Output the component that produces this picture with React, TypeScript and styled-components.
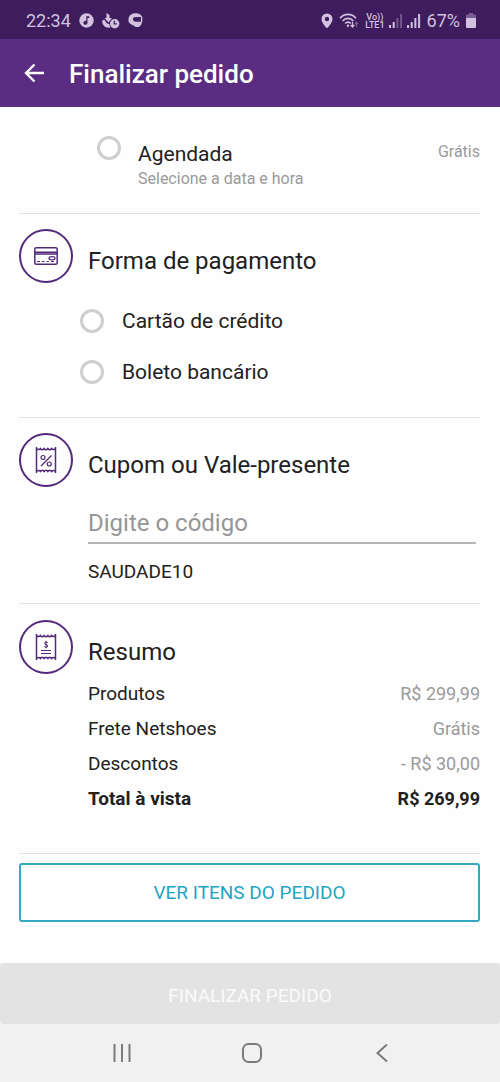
import React, { useState } from "react";
import styled, { createGlobalStyle } from "styled-components";

const GlobalStyle = createGlobalStyle`
  *, *::before, *::after { box-sizing: border-box; }
  body {
    margin: 0;
    background: #fefefe;
    color: #212121;
    font-family: Roboto, "Liberation Sans", sans-serif;
  }
  h1, h2, p, dl, dd, dt, fieldset { margin: 0; padding: 0; border: 0; font-weight: 400; }
  button, input { font-family: inherit; }
`;

const Screen = styled.div`
  display: flex;
  flex-direction: column;
  min-height: 100vh;
`;

const StatusBar = styled.div`
  display: flex;
  align-items: center;
  justify-content: space-between;
  height: 39px;
  padding: 2px 24px 0 26px;
  background: #3f1c5e;
  color: #d2c2df;
  font-size: 18px;
  line-height: 24px;
`;

const StatusGroup = styled.div<{ $gap: number }>`
  display: flex;
  align-items: center;
  gap: ${(p) => p.$gap}px;
`;

const VoLte = styled.span`
  display: flex;
  flex-direction: column;
  font-size: 9px;
  font-weight: 500;
  line-height: 8px;
  text-align: center;
`;

const AppBar = styled.header`
  display: flex;
  align-items: center;
  gap: 21px;
  height: 68px;
  padding: 0 20px;
  background: #5a2d82;
  color: #ffffff;
`;

const IconButton = styled.button`
  display: flex;
  align-items: center;
  justify-content: center;
  width: 28px;
  height: 28px;
  padding: 0;
  border: 0;
  background: none;
  color: inherit;
`;

const AppTitle = styled.h1`
  padding-top: 2px;
  font-size: 26px;
  font-weight: 500;
  line-height: 36px;
`;

const Main = styled.main`
  flex: 1;
  padding: 0 20px 41px 19px;
`;

const Section = styled.section<{ $top?: number; $bottom: number }>`
  padding: ${(p) => p.$top ?? 15}px 0 ${(p) => p.$bottom}px;
  border-bottom: 1px solid #e2e2e2;
`;

const SectionHead = styled.div`
  display: flex;
  gap: 15px;
`;

const Badge = styled.span`
  display: flex;
  align-items: center;
  justify-content: center;
  flex: none;
  width: 54px;
  height: 54px;
  border: 2px solid #532a7c;
  border-radius: 50%;
  color: #532a7c;
`;

const SectionTitle = styled.h2`
  padding-top: 16px;
  font-size: 24px;
  line-height: 32px;
`;

const Radio = styled.input`
  appearance: none;
  flex: none;
  width: 24px;
  height: 24px;
  margin: 0;
  border: 3px solid #cfcfcf;
  border-radius: 50%;
  background: #ffffff;
  &:checked {
    border-color: #5a2d82;
    box-shadow: inset 0 0 0 3px #ffffff;
    background: #5a2d82;
  }
`;

const DeliveryOption = styled.label`
  display: flex;
  align-items: flex-start;
  padding-left: 78px;
`;

const DeliveryText = styled.span`
  display: flex;
  flex: 1;
  flex-direction: column;
  padding: 4px 0 0 17px;
`;

const OptionName = styled.span`
  font-size: 21px;
  line-height: 28px;
`;

const Hint = styled.span`
  color: #9a9a9a;
  font-size: 16px;
  line-height: 22px;
`;

const DeliveryPrice = styled(Hint)`
  padding-top: 5px;
`;

const PaymentOptions = styled.fieldset`
  padding: 12px 0 0 61px;
`;

const PaymentOption = styled.label`
  display: flex;
  align-items: center;
  gap: 18px;
  height: 51px;
`;

const CouponForm = styled.div`
  padding: 17px 4px 0 69px;
`;

const CouponInput = styled.input`
  display: block;
  width: 100%;
  height: 40px;
  padding: 0;
  border: 0;
  border-bottom: 2px solid #b5b5b5;
  border-radius: 0;
  outline: 0;
  background: none;
  color: #212121;
  font-size: 24px;
  &::placeholder { color: #969696; opacity: 1; }
`;

const CouponCode = styled.p`
  padding-top: 16px;
  font-size: 19px;
  line-height: 24px;
`;

const Summary = styled.dl`
  padding: 2px 0 0 69px;
`;

const SummaryRow = styled.div<{ $total?: boolean }>`
  display: flex;
  align-items: center;
  justify-content: space-between;
  height: 35px;
  dt, dd { font-weight: ${(p) => (p.$total ? 700 : 400)}; }
  dt { font-size: 19px; }
  dd {
    color: ${(p) => (p.$total ? "#212121" : "#9a9a9a")};
    font-size: 18px;
  }
`;

const OutlineButton = styled.button`
  display: block;
  width: 100%;
  height: 59px;
  margin-top: 9px;
  border: 2px solid #35a9c4;
  border-radius: 3px;
  background: #ffffff;
  color: #1fa5c4;
  font-size: 19px;
`;

const SubmitArea = styled.div`
  background: #f1f1f1;
`;

const SubmitButton = styled.button`
  display: block;
  width: 100%;
  height: 61px;
  padding: 4px 0 0;
  border: 0;
  border-radius: 4px;
  background: #e3e3e3;
  color: #fafafa;
  font-size: 19px;
`;

const NavBar = styled.nav`
  display: flex;
  align-items: center;
  justify-content: space-between;
  height: 58px;
  padding: 0 104px 0 108px;
  background: #f1f1f1;
  color: #7b7b7b;
`;

const MusicIcon = () => (
  <svg width="15" height="15" viewBox="0 0 15 15" aria-hidden="true">
    <circle cx="7.500" cy="7.500" r="7.200" fill="currentColor" />
    <path d="M7.300 3.200h3v1.900H8.500v4.600a2 2 0 1 1-1.200-1.800z" fill="#3f1c5e" />
  </svg>
);

const DownloadClockIcon = () => (
  <svg width="18" height="16" viewBox="0 0 18 16" aria-hidden="true">
    <path d="M4.500 0 7.500 2v3H10L6.500 9.500 2.500 5h2z" fill="currentColor" />
    <path d="M0 8.500q1-2.500 2.500-1.500l2.500 3.500 2.500.5q-.2 2 1 3.500Q1.500 16 0 8.500z" fill="currentColor" />
    <circle cx="12.700" cy="10.700" r="4.700" fill="currentColor" />
    <path d="M12.300 7.800v3h2.400" stroke="#3f1c5e" strokeWidth="1.200" fill="none" />
  </svg>
);

const HelmetIcon = () => (
  <svg width="15" height="15" viewBox="0 0 15 15" aria-hidden="true">
    <path
      d="M7.500.3C11 .3 13.600 2 14 4H7.500C5.300 4 5 5.200 5 6.200c0 1.500 1.200 2.500 3 2.500h5.800c0 3-1.600 5.400-4.800 5.400-2 0-2.500-1-4-1.800C2 11 .4 9.800.4 6.800.4 3 3.400.3 7.500.3z"
      fill="currentColor"
    />
    <path d="M13.600 3.800v5.200" stroke="currentColor" strokeWidth="1.400" />
  </svg>
);

const PinIcon = () => (
  <svg width="12" height="16" viewBox="0 0 12 16" aria-hidden="true">
    <path
      d="M6 .5a5.500 5.500 0 0 0-5.500 5.500C.5 10 6 15.300 6 15.300S11.500 10 11.500 6A5.500 5.500 0 0 0 6 .5zm0 3.300a2.200 2.200 0 1 1 0 4.400 2.200 2.200 0 0 1 0-4.400z"
      fill="currentColor"
      fillRule="evenodd"
    />
  </svg>
);

const WifiIcon = () => (
  <svg width="20" height="16" viewBox="0 0 20 16" fill="none" stroke="currentColor" aria-hidden="true">
    <path d="M1 5.200c4.500-5 11.500-5 16 0M3.600 8c3-3.400 7.800-3.400 10.800 0M6.200 10.500c1.600-1.800 4-1.800 5.600 0" strokeWidth="1.700" />
    <circle cx="9" cy="12.700" r="1.200" fill="currentColor" stroke="none" />
    <path d="M13.500 9v4.500M11.700 12l1.800 2 1.800-2" strokeWidth="1.200" />
    <path d="M17.500 14V9.500M16 11l1.500-1.800L19 11" strokeWidth="1.200" opacity="0.4" />
  </svg>
);

const SignalIcon = ({ strength }: { strength: number }) => (
  <svg width="14" height="15" viewBox="0 0 14 15" fill="currentColor" aria-hidden="true">
    {[3, 6, 10, 14].map((h, i) => (
      <rect key={h} x={i * 3.7} y={15 - h} width="2" height={h} opacity={i < strength ? 1 : 0.35} />
    ))}
  </svg>
);

const BatteryIcon = () => (
  <svg width="10" height="15" viewBox="0 0 10 15" fill="currentColor" aria-hidden="true">
    <path d="M3 0h4v1.500h2q1 0 1 1V5H0V2.500q0-1 1-1h2z" opacity="0.4" />
    <path d="M0 5h10v9q0 1-1 1H1q-1 0-1-1z" />
  </svg>
);

const BackArrow = () => (
  <svg width="22" height="20" viewBox="0 0 22 20" fill="none" stroke="currentColor" strokeWidth="2.400" aria-hidden="true">
    <path d="M21 10H3M11.500 1.500 3 10l8.500 8.500" />
  </svg>
);

const CardIcon = () => (
  <svg width="24" height="18" viewBox="0 0 24 18" fill="none" stroke="currentColor" strokeWidth="1.500" aria-hidden="true">
    <rect x="0.800" y="0.800" width="22.400" height="16.400" rx="1.500" />
    <path d="M1 5.200h22M1 7h22" />
    <ellipse cx="18" cy="11.200" rx="3" ry="1.600" strokeWidth="1.200" />
    <path d="M3 14.500h3M8 14.500h2.500M12.500 14.500H15M17 14.500h3" strokeWidth="1.200" />
  </svg>
);

const ReceiptOutline = () => (
  <path d="M1.500 1v26M20.500 1v26M1.500 2.500q2 2 4 0 1.600 2.600 3.600 0 1.900 2.600 3.800 0 2 2.600 3.600 0 2 2 4 0M1.500 25.500q2-2 4 0 1.600-2.600 3.600 0 1.900-2.600 3.800 0 2-2.600 3.600 0 2-2 4 0" />
);

const CouponIcon = () => (
  <svg width="22" height="28" viewBox="0 0 22 28" fill="none" stroke="currentColor" strokeWidth="1.500" aria-hidden="true">
    <ReceiptOutline />
    <circle cx="8" cy="11.500" r="2" strokeWidth="1.200" />
    <circle cx="14.300" cy="18" r="2" strokeWidth="1.200" />
    <path d="M16.500 9.500 6 20" strokeWidth="1.200" />
  </svg>
);

const ReceiptIcon = () => (
  <svg width="22" height="28" viewBox="0 0 22 28" fill="none" stroke="currentColor" strokeWidth="1.500" aria-hidden="true">
    <ReceiptOutline />
    <path d="M6 17.500h10M6 20.500h10" strokeWidth="1.200" />
    <path d="M12.800 9.800C12 8.600 9.500 8.800 9.500 10.300c0 1.700 3.300 1 3.300 2.700 0 1.600-2.800 1.700-3.600.4M11.100 7.800v7.600" strokeWidth="1" />
  </svg>
);

const RecentsIcon = () => (
  <svg width="20" height="20" viewBox="0 0 20 20" stroke="currentColor" strokeWidth="2" aria-hidden="true">
    <path d="M2.500 1v18M10 1v18M17.500 1v18" />
  </svg>
);

const HomeIcon = () => (
  <svg width="20" height="20" viewBox="0 0 20 20" fill="none" stroke="currentColor" strokeWidth="2" aria-hidden="true">
    <rect x="1" y="1" width="18" height="18" rx="5.500" />
  </svg>
);

const NavBackIcon = () => (
  <svg width="20" height="20" viewBox="0 0 20 20" fill="none" stroke="currentColor" strokeWidth="2" aria-hidden="true">
    <path d="M15 1.500 5.500 10l9.500 8.500" />
  </svg>
);

const payments = ["Cartão de crédito", "Boleto bancário"];

const summary = [
  { label: "Produtos", value: "R$ 299,99" },
  { label: "Frete Netshoes", value: "Grátis" },
  { label: "Descontos", value: "- R$ 30,00" },
  { label: "Total à vista", value: "R$ 269,99", total: true },
];

export default function App() {
  const [code, setCode] = useState("");

  return (
    <Screen>
      <GlobalStyle />
      <StatusBar>
        <StatusGroup $gap={8}>
          <span>22:34</span>
          <MusicIcon />
          <DownloadClockIcon />
          <HelmetIcon />
        </StatusGroup>
        <StatusGroup $gap={6}>
          <PinIcon />
          <WifiIcon />
          <StatusGroup $gap={4}>
            <VoLte>
              <span>Vo))</span>
              <span>LTE1</span>
            </VoLte>
            <SignalIcon strength={2} />
            <SignalIcon strength={4} />
          </StatusGroup>
          <StatusGroup $gap={6}>
            <span>67%</span>
            <BatteryIcon />
          </StatusGroup>
        </StatusGroup>
      </StatusBar>

      <AppBar>
        <IconButton type="button" aria-label="Voltar">
          <BackArrow />
        </IconButton>
        <AppTitle>Finalizar pedido</AppTitle>
      </AppBar>

      <Main>
        <Section $top={29} $bottom={23}>
          <DeliveryOption>
            <Radio type="radio" name="entrega" />
            <DeliveryText>
              <OptionName>Agendada</OptionName>
              <Hint>Selecione a data e hora</Hint>
            </DeliveryText>
            <DeliveryPrice>Grátis</DeliveryPrice>
          </DeliveryOption>
        </Section>

        <Section $bottom={20}>
          <SectionHead>
            <Badge><CardIcon /></Badge>
            <SectionTitle>Forma de pagamento</SectionTitle>
          </SectionHead>
          <PaymentOptions aria-label="Forma de pagamento">
            {payments.map((name) => (
              <PaymentOption key={name}>
                <Radio type="radio" name="pagamento" />
                <OptionName>{name}</OptionName>
              </PaymentOption>
            ))}
          </PaymentOptions>
        </Section>

        <Section $bottom={19}>
          <SectionHead>
            <Badge><CouponIcon /></Badge>
            <SectionTitle>Cupom ou Vale-presente</SectionTitle>
          </SectionHead>
          <CouponForm>
            <CouponInput
              type="text"
              aria-label="Código do cupom"
              placeholder="Digite o código"
              value={code}
              onChange={(e) => setCode(e.target.value)}
            />
            <CouponCode>SAUDADE10</CouponCode>
          </CouponForm>
        </Section>

        <Section $top={16} $bottom={37}>
          <SectionHead>
            <Badge><ReceiptIcon /></Badge>
            <SectionTitle>Resumo</SectionTitle>
          </SectionHead>
          <Summary>
            {summary.map((row) => (
              <SummaryRow key={row.label} $total={row.total}>
                <dt>{row.label}</dt>
                <dd>{row.value}</dd>
              </SummaryRow>
            ))}
          </Summary>
        </Section>

        <OutlineButton type="button">VER ITENS DO PEDIDO</OutlineButton>
      </Main>

      <SubmitArea>
        <SubmitButton type="submit" disabled>FINALIZAR PEDIDO</SubmitButton>
      </SubmitArea>

      <NavBar aria-label="Sistema">
        <IconButton type="button" aria-label="Recentes"><RecentsIcon /></IconButton>
        <IconButton type="button" aria-label="Início"><HomeIcon /></IconButton>
        <IconButton type="button" aria-label="Voltar à tela anterior"><NavBackIcon /></IconButton>
      </NavBar>
    </Screen>
  );
}
